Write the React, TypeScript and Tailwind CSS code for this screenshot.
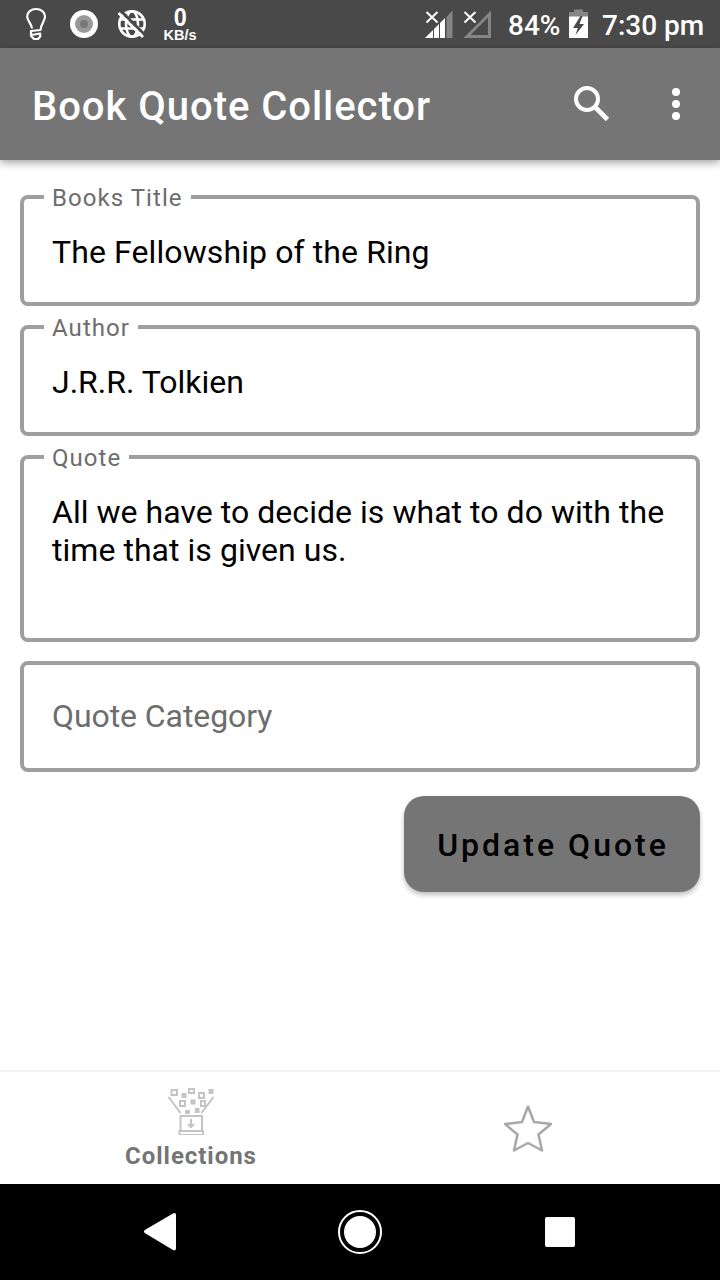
import type { ReactNode } from "react";

function Field({ label, className, children }: { label?: string; className: string; children: ReactNode }) {
  return (
    <fieldset className={`rounded-lg border-4 border-[#9e9e9e] pl-5 ${className}`}>
      {label && (
        <legend className="h-1 px-2 text-[24px] leading-[4px] tracking-[1.060px] text-[#6d6d6d]">
          <span className="relative top-px">{label}</span>
        </legend>
      )}
      <div className="pl-2 text-[32px] leading-[38px]">{children}</div>
    </fieldset>
  );
}

function StatusBar() {
  return (
    <div className="flex h-12 shrink-0 items-start bg-[#494949] text-white">
      <svg className="ml-6 h-12 w-6" viewBox="24 0 24 48" fill="none" stroke="white" strokeWidth="2.200">
        <path d="M32 28.500C31.500 23.500 27.200 21 27.200 16.500C27.200 12 31 9 36 9S45 12 45 16.500C45 21 41 23.500 40.500 30L31 31V36L34 39H38L40.200 36.500V33.500L31.500 35" strokeLinejoin="round" />
      </svg>
      <svg className="ml-[22px] h-12 w-7" viewBox="70 0 28 48">
        <circle cx="84" cy="24" r="14" fill="white" />
        <circle cx="84" cy="24" r="9" fill="#999" />
        <circle cx="84" cy="24" r="4" fill="#777" />
      </svg>
      <svg className="ml-[18px] h-12 w-8" viewBox="116 0 32 48" fill="none" stroke="white" strokeWidth="2.600">
        <circle cx="132" cy="24" r="12.700" />
        <ellipse cx="132" cy="24" rx="6" ry="12.700" />
        <path d="M120 19.500H144M120 28.500H144" />
        <path d="M120 10L145 35" stroke="#494949" strokeWidth="3" />
        <path d="M118.500 13L143 37" strokeWidth="2.800" />
      </svg>
      <div className="ml-[13px] flex w-[38px] flex-col items-center font-['Liberation_Sans',sans-serif]">
        <span className="mt-[6px] h-[23px] scale-x-[0.9] text-[26px] font-bold leading-[23px]">0</span>
        <span className="text-[14.500px] font-bold leading-[13px]">KB/s</span>
      </div>
      <svg className="ml-[225px] h-12 w-[30px]" viewBox="424 0 30 48">
        <path d="M425 38L433 30V38ZM434 29L439 24V38H434ZM440 23L445 18V38H440Z" fill="white" />
        <path d="M446.500 17L452.500 10.500V38H446.500Z" fill="#858585" />
        <path d="M426.500 12L437.500 22.500M437.500 12L426.500 22.500" stroke="white" strokeWidth="2" />
      </svg>
      <svg className="ml-2 h-12 w-[30px]" viewBox="462 0 30 48" fill="none">
        <path d="M467 36.500L489.500 14V36.500Z" stroke="#858585" strokeWidth="3" />
        <path d="M464.500 12L475.500 22.500M475.500 12L464.500 22.500" stroke="white" strokeWidth="2" />
      </svg>
      <span className="ml-4 mt-2 w-[61px] text-[28px] font-medium leading-9">84%</span>
      <svg className="h-12 w-[19px]" viewBox="569 0 19 48">
        <path d="M569 12H574V9.500H583V12H588V17H569Z" fill="#858585" />
        <path d="M569 16.500H588V38H569Z" fill="white" />
        <path d="M580.500 16L573 28H577.800L575.500 35L584 24H579.500L582.500 16Z" fill="#494949" />
      </svg>
      <span className="ml-[14px] mt-2 whitespace-nowrap text-[28px] font-medium leading-9">7:30 pm</span>
    </div>
  );
}

export default function App() {
  return (
    <div className="flex h-[1280px] w-[720px] flex-col overflow-hidden bg-white font-[Roboto,sans-serif] text-black">
      <StatusBar />
      <header className="flex h-28 shrink-0 items-center bg-[#757575] pl-8 text-white shadow-[0_3px_8px_rgba(0,0,0,0.35)]">
        <h1 className="mt-1.5 flex-1 whitespace-nowrap text-[40px] font-medium tracking-[0.960px]">Book Quote Collector</h1>
        <svg className="h-12 w-12" viewBox="567 80 48 48" fill="none" stroke="white" strokeWidth="4">
          <circle cx="587" cy="99" r="11" />
          <path d="M594.500 106.500L607.500 119.500" strokeWidth="4.600" />
        </svg>
        <svg className="ml-[49px] mr-8 h-12 w-6" viewBox="664 80 24 48" fill="white">
          <circle cx="676" cy="92" r="4" />
          <circle cx="676" cy="104" r="4" />
          <circle cx="676" cy="116" r="4" />
        </svg>
      </header>

      <main className="flex flex-1 flex-col px-5 pt-[35px]">
        <Field label="Books Title" className="h-[111px] pt-[34px]">
          <span className="tracking-[0.1px]">The Fellowship of the Ring</span>
        </Field>
        <Field label="Author" className="mt-[19px] h-[111px] pt-[34px]">J.R.R. Tolkien</Field>
        <Field label="Quote" className="mt-[19px] h-[187px] pt-[34px]">
          <span className="tracking-[0.040px]">All we have to decide is what to do with the time that is given us.</span>
        </Field>
        <Field className="mt-[19px] h-[111px] pt-8">
          <span className="tracking-[-0.080px] text-[#6d6d6d]">Quote Category</span>
        </Field>
        <button className="mt-6 h-24 w-[296px] self-end whitespace-nowrap rounded-[20px] bg-[#757575] pl-0.5 pt-0.5 text-[32px] font-medium tracking-[3px] shadow-[0_3px_5px_rgba(0,0,0,0.25)]">
          Update Quote
        </button>
      </main>

      <nav className="flex h-[114px] shrink-0 border-t-2 border-[#f2f2f2]">
        <div className="flex w-[382px] flex-col items-center pt-[15px]">
          <svg className="h-12 w-12" viewBox="167 1087 48 48" fill="none" stroke="#c4c4c4" strokeWidth="2">
            <path d="M168.500 1097L180.500 1113M213.500 1097L201.500 1113" />
            <path d="M180.500 1130.500V1116H202V1130.500M179.500 1131H203V1135H179.500Z" />
            <path d="M191 1119V1127M188 1124L191 1127L194 1124" />
            <path d="M171.500 1090H177V1095H171.500ZM189 1089H194V1093H189ZM199 1093H204V1098H199ZM180 1101H185V1106H180ZM201 1101H205V1106H201Z" />
            <path d="M181.500 1093H186.500V1098H181.500ZM208.500 1089H213.500V1094H208.500ZM190.500 1099.500H195.500V1104.500H190.500ZM185 1110H190V1114H185ZM195 1108H199.500V1113H195Z" fill="#c4c4c4" stroke="none" />
          </svg>
          <span className="mt-[7px] text-[24px] font-bold leading-7 tracking-[0.960px] text-[#757575]">Collections</span>
        </div>
        <div className="flex flex-1 flex-col pl-[122px] pt-[33px]">
          <svg className="h-12 w-12" viewBox="504 1104 48 48" fill="none" stroke="#a8a8a8" strokeWidth="2.500" strokeLinejoin="round">
            <path d="M528 1105.500L534 1121L551 1123L538.500 1133.500L542 1149.500L528 1142L514 1149.500L517.500 1133.500L505 1123L522 1121Z" />
          </svg>
        </div>
      </nav>

      <div className="flex h-24 shrink-0 items-center bg-black">
        <svg className="ml-36 h-10 w-8" viewBox="144 1212 32 40" fill="white">
          <path d="M144.800 1230L173 1213.400Q176 1212 176 1215V1248Q176 1251.500 173 1250L144.800 1233Q143.200 1231.500 144.800 1230Z" />
        </svg>
        <svg className="ml-[162px] h-11 w-11" viewBox="338 1210 44 44" fill="none" stroke="white" strokeWidth="2">
          <circle cx="360" cy="1232" r="21" />
          <circle cx="360" cy="1232" r="16" fill="white" stroke="none" />
        </svg>
        <div className="ml-[163px] h-[30px] w-[30px] rounded-[2px] bg-white" />
      </div>
    </div>
  );
}
